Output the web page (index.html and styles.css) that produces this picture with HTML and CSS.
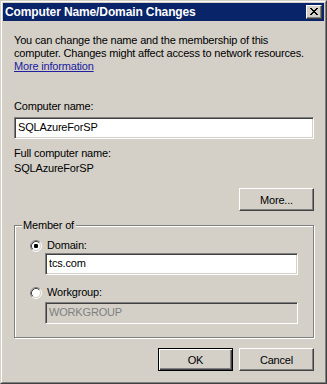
FILE: index.html
```html
<!DOCTYPE html>
<html>
<head>
<meta charset="utf-8">
<link rel="stylesheet" href="styles.css">
</head>
<body>
<div class="window">
  <div class="frame">
    <div class="titlebar">
      <span class="title">Computer Name/Domain Changes</span>
      <span class="close">
        <svg width="8" height="7" viewBox="0 0 8 7"><path d="M0 0h2v1h-2zM6 0h2v1h-2zM1 1h2v1h-2zM5 1h2v1h-2zM2 2h4v1h-4zM3 3h2v1h-2zM2 4h4v1h-4zM1 5h2v1h-2zM5 5h2v1h-2zM0 6h2v1h-2zM6 6h2v1h-2z" fill="#000"/></svg>
      </span>
    </div>
    <div class="body">
      <p class="intro">You can change the name and the membership of this<br>computer. Changes might affect access to network resources.<br><a class="link" href="#">More information</a></p>
      <div class="label lbl-name">Computer name:</div>
      <div class="edit">SQLAzureForSP</div>
      <div class="label lbl-full">Full computer name:</div>
      <div class="label lbl-value">SQLAzureForSP</div>
      <div class="row-right more-row"><button class="btn">More...</button></div>
      <div class="group">
        <span class="legend">Member of</span>
        <div class="radio-row">
          <svg class="radio" width="12" height="12" viewBox="0 0 12 12">
            <circle cx="6" cy="6" r="4.5" fill="#fff"/>
            <path d="M2.11 9.89A5.5 5.5 0 0 1 9.89 2.11" stroke="#808080" fill="none"/>
            <path d="M9.89 2.11A5.5 5.5 0 0 1 2.11 9.89" stroke="#fff" fill="none"/>
            <path d="M2.82 9.18A4.5 4.5 0 0 1 9.18 2.82" stroke="#404040" fill="none"/>
            <path d="M9.18 2.82A4.5 4.5 0 0 1 2.82 9.18" stroke="#d4d0c8" fill="none"/>
            <rect x="4" y="4" width="4" height="4" rx="1.2" fill="#000"/>
          </svg>
          <span>Domain:</span>
        </div>
        <div class="edit sub">tcs.com</div>
        <div class="radio-row wg">
          <svg class="radio" width="12" height="12" viewBox="0 0 12 12">
            <circle cx="6" cy="6" r="4.5" fill="#fff"/>
            <path d="M2.11 9.89A5.5 5.5 0 0 1 9.89 2.11" stroke="#808080" fill="none"/>
            <path d="M9.89 2.11A5.5 5.5 0 0 1 2.11 9.89" stroke="#fff" fill="none"/>
            <path d="M2.82 9.18A4.5 4.5 0 0 1 9.18 2.82" stroke="#404040" fill="none"/>
            <path d="M9.18 2.82A4.5 4.5 0 0 1 2.82 9.18" stroke="#d4d0c8" fill="none"/>
          </svg>
          <span>Workgroup:</span>
        </div>
        <div class="edit sub disabled">WORKGROUP</div>
      </div>
      <div class="row-right buttons">
        <button class="btn default">OK</button>
        <button class="btn">Cancel</button>
      </div>
    </div>
  </div>
</div>
</body>
</html>
```

FILE: styles.css
```css
* { box-sizing: border-box; }
html, body { margin: 0; padding: 0; background: #d4d0c8; }
body { font-family: "Liberation Sans", Arial, sans-serif; font-size: 11px; line-height: 13px; color: #000; letter-spacing: -0.18px; }

.window {
  width: 327px;
  height: 384px;
  border: 1px solid;
  border-color: #d4d0c8 #404040 #404040 #d4d0c8;
  background: #d4d0c8;
}
.frame {
  height: 100%;
  border: 1px solid;
  border-color: #fff #808080 #808080 #fff;
  padding: 1px;
  display: flex;
  flex-direction: column;
}
.titlebar {
  height: 18px;
  background: #0a246a;
  display: flex;
  align-items: center;
  justify-content: space-between;
  padding: 0 2px 0 2px;
}
.title {
  color: #fff;
  font-weight: bold;
  font-size: 12px;
  line-height: 14px;
  letter-spacing: -0.12px;
}
.close {
  width: 16px;
  height: 14px;
  background: #d4d0c8;
  border: 1px solid;
  border-color: #fff #404040 #404040 #fff;
  box-shadow: inset -1px -1px 0 #808080;
  display: flex;
  align-items: center;
  justify-content: center;
  padding: 0 1px 1px 0;
}
.close svg { display: block; }

.body {
  flex: 1;
  padding: 13px 10px 0 11px;
  display: flex;
  flex-direction: column;
}
.intro { margin: 0; white-space: nowrap; }
.link { color: #20209f; text-decoration: underline; }
.lbl-name { margin-top: 27px; }
.lbl-full { margin-top: 8px; }
.lbl-value { margin-top: 2px; }

.edit {
  height: 22px;
  margin-top: 4px;
  background: #fff;
  border: 1px solid;
  border-color: #808080 #fff #fff #808080;
  box-shadow: inset 1px 1px 0 #404040, inset -1px -1px 0 #d4d0c8;
  padding: 3px 3px 0 3px;
  font-size: 11px;
}
.edit.disabled { background: #d4d0c8; color: #808080; }

.row-right { display: flex; justify-content: flex-end; gap: 6px; }
.more-row { margin-top: 13px; }

.btn {
  width: 75px;
  height: 23px;
  padding: 0;
  background: #d4d0c8;
  font-family: "Liberation Sans", Arial, sans-serif;
  font-size: 11px;
  letter-spacing: -0.18px;
  color: #000;
  border: 1px solid;
  border-color: #fff #404040 #404040 #fff;
  box-shadow: inset -1px -1px 0 #808080;
}
.btn.default {
  border-color: #000;
  box-shadow: inset 1px 1px 0 #fff, inset -1px -1px 0 #404040, inset -2px -2px 0 #808080;
}

.group {
  position: relative;
  margin-top: 14px;
  height: 113px;
  border: 1px solid #808080;
  box-shadow: 1px 1px 0 #fff, inset 1px 1px 0 #fff;
  padding: 13px 15px 0 15px;
}
.legend {
  position: absolute;
  top: -7px;
  left: 7px;
  padding: 0 2px 0 1px;
  background: #d4d0c8;
}
.radio-row {
  display: flex;
  align-items: center;
  gap: 5px;
  height: 13px;
}
.radio { display: block; flex: none; }
.edit.sub { margin: 1px 0 0 15px; }
.radio-row.wg { margin-top: 11px; }
.edit.sub.disabled { margin-top: 3px; }

.buttons { margin-top: 10px; }
```
